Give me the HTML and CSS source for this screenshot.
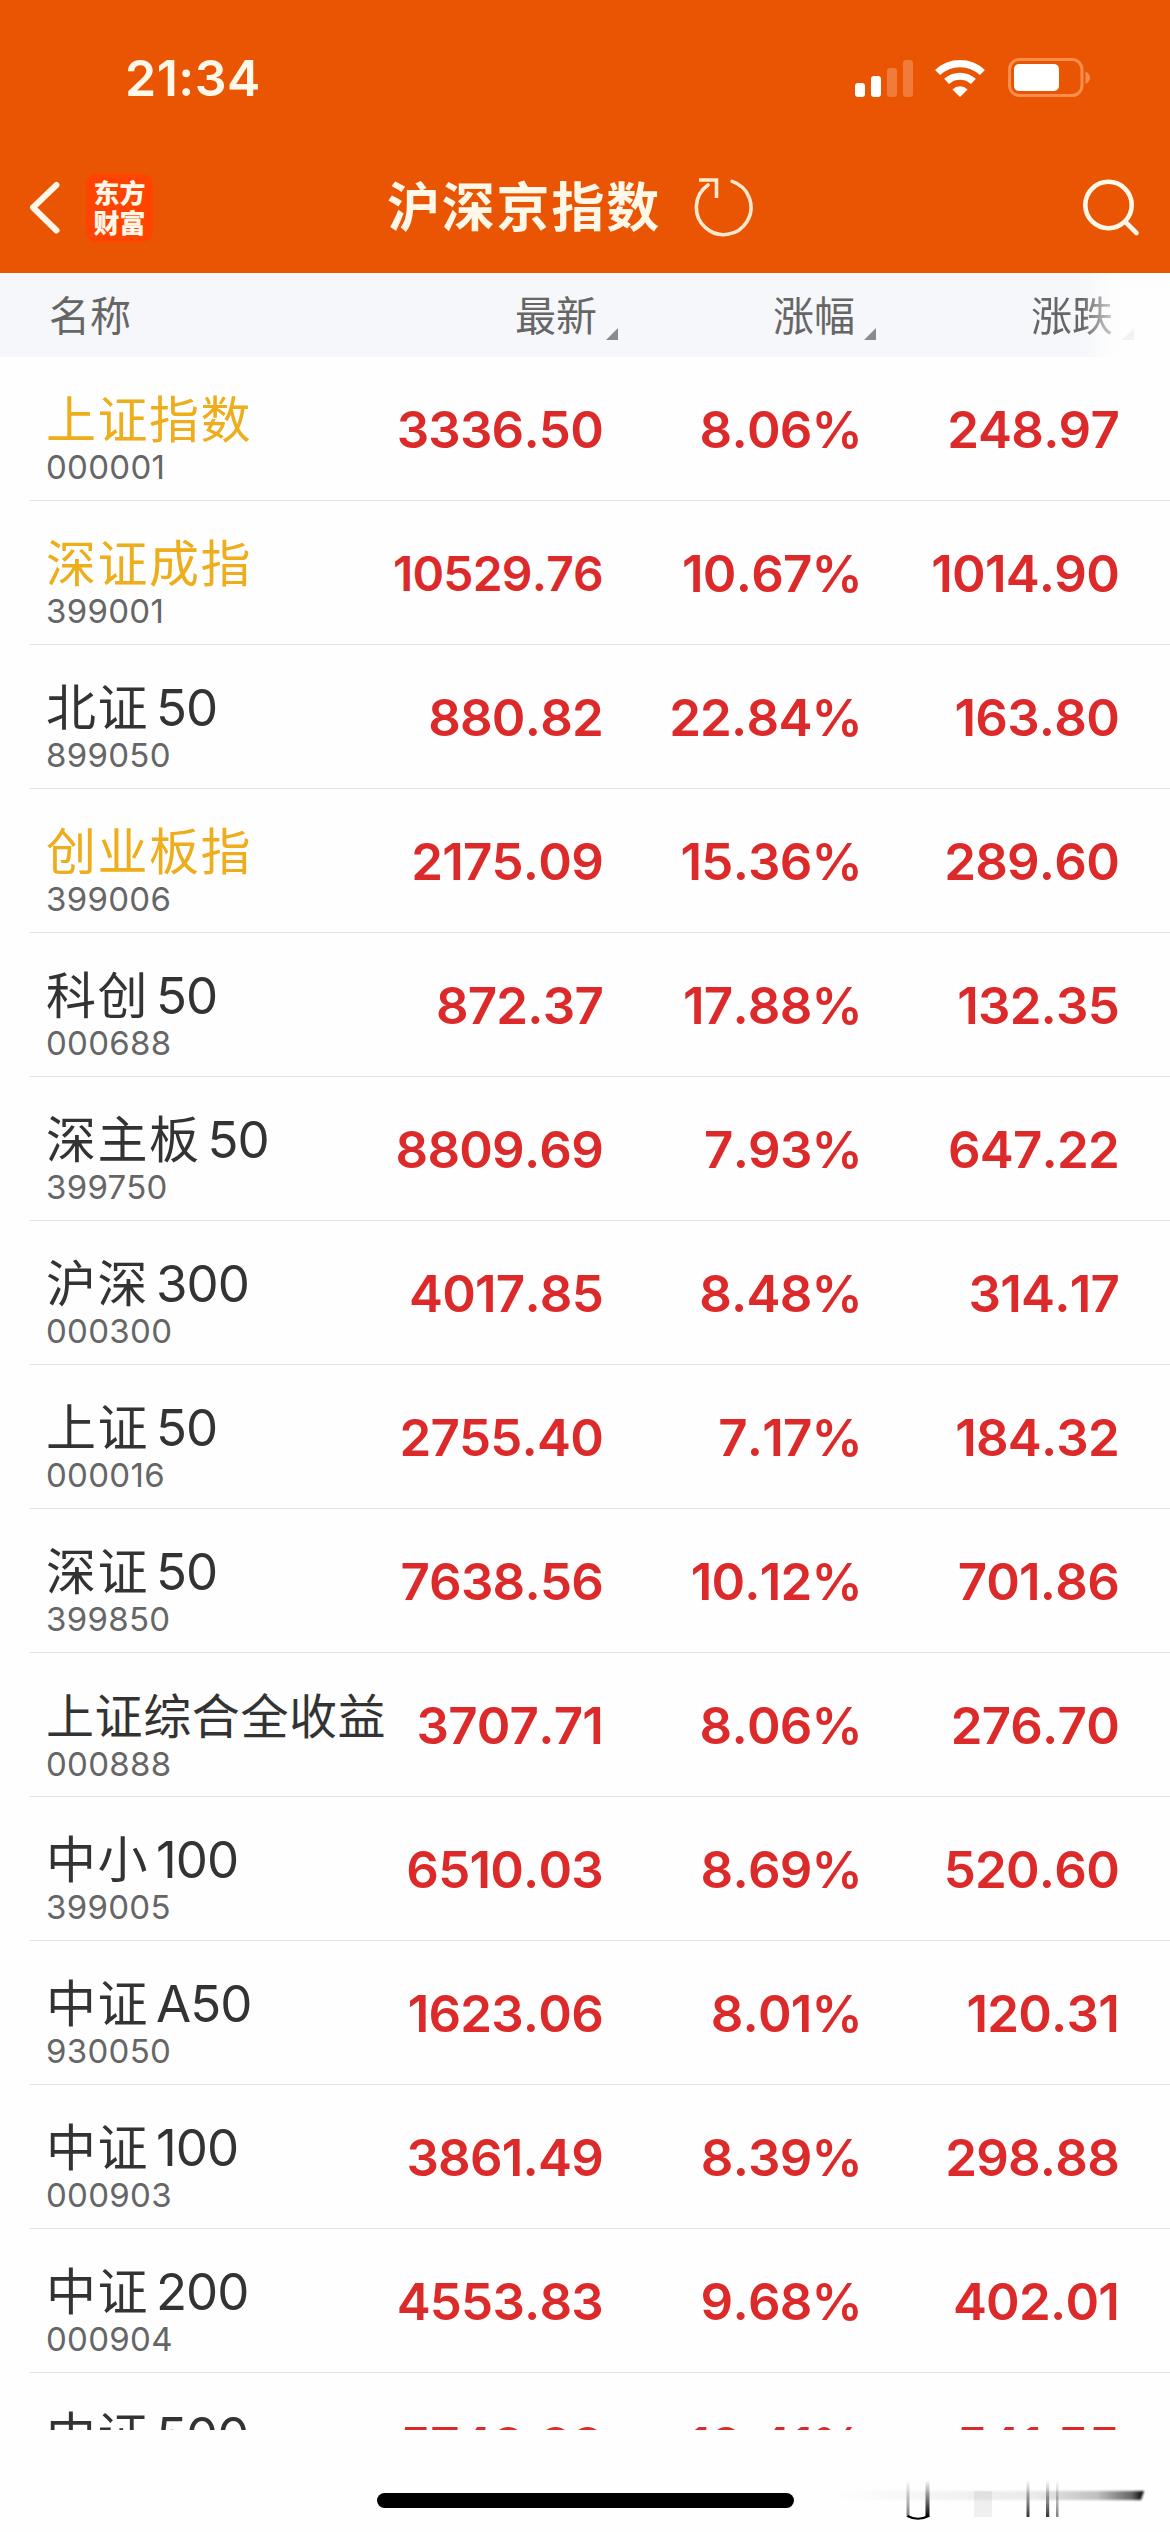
FILE: index.html
```html
<!DOCTYPE html>
<html lang="zh-CN">
<head>
<meta charset="UTF-8" />
<title>沪深京指数</title>
<link rel="stylesheet" href="styles.css">
</head>
<body>

<header class="top">
  <div class="status">
    <span class="time">21:34</span>
    <div class="status-icons">
      <svg class="signal" width="60" height="38" viewBox="0 0 60 38">
        <rect x="1" y="24" width="10" height="14" rx="3" fill="#fff"/>
        <rect x="17" y="17" width="10" height="21" rx="3" fill="#fff"/>
        <rect x="33" y="9" width="10" height="29" rx="3" fill="#f17b3a"/>
        <rect x="49" y="1" width="10" height="37" rx="3" fill="#f17b3a"/>
      </svg>
      <svg class="wifi" width="50" height="38" viewBox="0 0 50 38">
        <g fill="none" stroke="#fff" stroke-width="7.2">
          <path d="M2.6 13.5 A32.5 32.5 0 0 1 47.4 13.5"/>
          <path d="M11.6 22.4 A20 20 0 0 1 38.4 22.4"/>
        </g>
        <path d="M25 38 L17.4 30.4 A11 11 0 0 1 32.6 30.4 Z" fill="#fff"/>
      </svg>
      <svg class="battery" width="84" height="40" viewBox="0 0 84 40">
        <rect x="1.5" y="1.5" width="72.5" height="36" rx="10" fill="none" stroke="#ff8d4d" stroke-width="3"/>
        <rect x="6" y="6" width="45" height="27" rx="5" fill="#fff"/>
        <path d="M77.5 13.5 Q82 16 82 19.7 Q82 23.5 77.5 26 Z" fill="#ff8d4d"/>
      </svg>
    </div>
  </div>
  <nav class="nav">
    <div class="nav-left">
      <svg width="32" height="54" viewBox="0 0 32 54"><path d="M28.500 4 L5 26.500 L28.500 49.500" fill="none" stroke="#fff7e8" stroke-width="6" stroke-linecap="round" stroke-linejoin="round"/></svg>
      <div class="logo">东方<br>财富</div>
    </div>
    <div class="nav-title">
      <h1>沪深京指数</h1>
      <svg width="60" height="60" viewBox="0 0 60 60">
        <path d="M38.2 3.4 A27.3 27.3 0 1 1 14 7" fill="none" stroke="#ffe9cf" stroke-width="3.6" stroke-linecap="round"/>
        <path d="M5 2 H22.5 V20" fill="none" stroke="#ffe9cf" stroke-width="3.6"/>
      </svg>
    </div>
    <svg class="search" width="58" height="58" viewBox="0 0 58 58">
      <circle cx="26.5" cy="26" r="23.2" fill="none" stroke="#fff7e8" stroke-width="4.6"/>
      <path d="M43.5 43 L54.5 54" stroke="#fff7e8" stroke-width="4.6" stroke-linecap="round"/>
    </svg>
  </nav>
</header>

<div class="thead">
  <span>名称</span>
  <span class="sort">最新</span>
  <span class="sort">涨幅</span>
  <span class="sort">涨跌</span>
</div>

<main class="list">
  <div class="row"><div class="name gold">上证指数<small>000001</small></div><b>3336.50</b><b>8.06%</b><b>248.97</b></div>
  <div class="row"><div class="name gold">深证成指<small>399001</small></div><b class="fit">10529.76</b><b>10.67%</b><b>1014.90</b></div>
  <div class="row"><div class="name">北证<i>50</i><small>899050</small></div><b>880.82</b><b>22.84%</b><b>163.80</b></div>
  <div class="row"><div class="name gold">创业板指<small>399006</small></div><b>2175.09</b><b>15.36%</b><b>289.60</b></div>
  <div class="row"><div class="name">科创<i>50</i><small>000688</small></div><b>872.37</b><b>17.88%</b><b>132.35</b></div>
  <div class="row"><div class="name">深主板<i>50</i><small>399750</small></div><b>8809.69</b><b>7.93%</b><b>647.22</b></div>
  <div class="row"><div class="name">沪深<i>300</i><small>000300</small></div><b>4017.85</b><b>8.48%</b><b>314.17</b></div>
  <div class="row"><div class="name">上证<i>50</i><small>000016</small></div><b>2755.40</b><b>7.17%</b><b>184.32</b></div>
  <div class="row"><div class="name">深证<i>50</i><small>399850</small></div><b>7638.56</b><b>10.12%</b><b>701.86</b></div>
  <div class="row"><div class="name"><span class="long">上证综合全收益</span><small>000888</small></div><b>3707.71</b><b>8.06%</b><b>276.70</b></div>
  <div class="row"><div class="name">中小<i>100</i><small>399005</small></div><b>6510.03</b><b>8.69%</b><b>520.60</b></div>
  <div class="row"><div class="name">中证<i>A50</i><small>930050</small></div><b>1623.06</b><b>8.01%</b><b>120.31</b></div>
  <div class="row"><div class="name">中证<i>100</i><small>000903</small></div><b>3861.49</b><b>8.39%</b><b>298.88</b></div>
  <div class="row"><div class="name">中证<i>200</i><small>000904</small></div><b>4553.83</b><b>9.68%</b><b>402.01</b></div>
  <div class="row"><div class="name">中证<i>500</i></div><b>5748.88</b><b>10.41%</b><b>541.55</b></div>
</main>

<footer class="bottom">
  <div class="home-bar"></div>
  <svg class="smudge" width="320" height="50" viewBox="0 0 320 50">
    <defs>
      <linearGradient id="h" x1="0" x2="1"><stop offset="0" stop-color="#000" stop-opacity="0"/><stop offset=".65" stop-color="#000" stop-opacity=".08"/><stop offset=".85" stop-color="#000" stop-opacity=".25"/><stop offset=".96" stop-color="#000" stop-opacity=".6"/><stop offset="1" stop-color="#000"/></linearGradient>
      <linearGradient id="v" x1="0" x2="0" y1="0" y2="1"><stop offset="0" stop-color="#000" stop-opacity="0"/><stop offset="1" stop-color="#000"/></linearGradient>
      <filter id="soft" x="-5%" y="-50%" width="110%" height="200%"><feGaussianBlur stdDeviation=".9"/></filter>
    </defs>
    <path d="M5 13 H314 L311 22 H5 Z" fill="url(#h)" filter="url(#soft)"/>
    <rect x="144" y="13" width="18" height="26" fill="#000" opacity=".06"/>
    <g fill="url(#v)">
      <rect x="76.500" y="2" width="3" height="37" opacity=".5"/>
      <rect x="95.500" y="2" width="4" height="37"/>
      <rect x="196.500" y="2" width="3" height="37" opacity=".8"/>
      <rect x="216" y="2" width="3.200" height="37" opacity=".8"/>
      <rect x="226" y="2" width="2.500" height="37" opacity=".5"/>
    </g>
    <path d="M77.500 38 Q88 43.500 98.500 38" fill="none" stroke="#000" stroke-width="2.200"/>
  </svg>
</footer>

</body>
</html>
```
FILE: styles.css
```css
* { box-sizing: border-box; }
body { margin: 0; width: 1170px; height: 2532px; overflow: hidden; background: #fefefe; font-family: Inter, "Noto Sans CJK SC", sans-serif; }
svg { display: block; flex: none; }

.top { height: 273px; background: #e95502; color: #fff7e8; }
.status { height: 156px; padding: 0 78px 0 125px; display: flex; align-items: center; justify-content: space-between; }
.time { font-size: 50px; font-weight: 600; line-height: 60px; letter-spacing: .5px; }
.status-icons { display: flex; align-items: center; }
.wifi { margin-left: 21px; }
.battery { margin-left: 23px; }

.nav { height: 103px; padding: 0 30px 0 28px; display: grid; grid-template-columns: 359px auto 1fr; align-items: center; }
.nav-left { display: flex; align-items: center; }
.logo { width: 67px; height: 68px; margin-left: 26px; padding-top: 3px; border-radius: 10px; background: #fe4400; font: 900 26px/30px "Noto Sans CJK SC", sans-serif; text-align: center; }
.nav-title { display: flex; align-items: center; gap: 33px; }
h1 { margin: 0; font-size: 53px; font-weight: 600; line-height: 60px; letter-spacing: 1.8px; }
.search { justify-self: end; }

.thead, .row { display: grid; grid-template-columns: minmax(0, 1fr) 257px 258px 258px; }
.thead { height: 84px; padding: 0 36px 0 49px; background: linear-gradient(90deg, #f6f7fa 1080px, #fefefe 1120px); color: #666; font-size: 41px; line-height: 86px; }
.sort { text-align: right; }
.sort::after { content: ""; display: inline-block; width: 12px; height: 12px; margin-left: 9px; vertical-align: -9px; background: #8a8b8d; clip-path: polygon(100% 0, 100% 100%, 0 100%); }
.sort:last-child { background: linear-gradient(90deg, #666 205px, #fefefe 252px); -webkit-background-clip: text; color: transparent; }
.sort:last-child::after { background: #f1f2f4; }

.list { height: 2073px; overflow: hidden; }
.row { position: relative; height: 144px; padding: 0 51px 0 46px; grid-template-columns: minmax(0, 1fr) 257px 259px 257px; }
.row::after { content: ""; position: absolute; left: 30px; right: 0; bottom: 0; height: 1px; background: #e4e4e4; }
.name { padding-top: 31px; font-size: 50px; line-height: 64px; letter-spacing: 1.5px; color: #333; white-space: nowrap; }
.name i { font-style: normal; font-size: 51px; margin-left: 7px; letter-spacing: -1px; }
.name small { display: block; margin-top: -2px; font-size: 33px; line-height: 34px; letter-spacing: .3px; color: #666; }
.gold { color: #eead1a; }
.long { font-size: 48px; letter-spacing: .6px; }
.row b { padding-top: 43px; font-size: 51px; font-weight: 600; line-height: 60px; letter-spacing: -.8px; font-kerning: none; text-align: right; color: #dc2a2a; }
.row .fit { font-size: 48px; }

.bottom { position: relative; padding-top: 63px; }
.home-bar { width: 417px; height: 15px; margin: 0 auto; border-radius: 8px; background: #000; }
.smudge { position: absolute; left: 830px; top: 48px; }
```
